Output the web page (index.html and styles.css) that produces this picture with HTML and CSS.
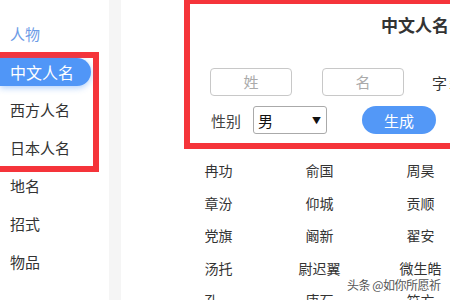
FILE: index.html
```html
<!DOCTYPE html>
<html lang="zh">
<head>
<meta charset="utf-8">
<link rel="stylesheet" href="styles.css">
</head>
<body>
<div class="page">
  <aside class="sidebar">
    <div class="cat">人物</div>
    <div class="hl-box">
      <div class="pill">中文人名</div>
      <div class="item first">西方人名</div>
      <div class="item last">日本人名</div>
    </div>
    <div class="item">地名</div>
    <div class="item">招式</div>
    <div class="item">物品</div>
  </aside>
  <div class="divider"></div>
  <main class="main">
    <section class="form-box">
      <h1 class="title">中文人名</h1>
      <div class="row row1">
        <div class="input">姓</div>
        <div class="input">名</div>
        <div class="label-zi">字<span class="orange">辈</span></div>
      </div>
      <div class="row row2">
        <span class="label">性别</span>
        <div class="select"><span>男</span><span class="arrow">▼</span></div>
        <button class="btn">生成</button>
      </div>
    </section>
    <div class="results">
      <span>冉功</span><span>俞国</span><span>周昊</span>
      <span>章汾</span><span>仰城</span><span>贡顺</span>
      <span>党旗</span><span>阚新</span><span>翟安</span>
      <span>汤托</span><span>尉迟翼</span><span>微生皓</span>
      <span>孔一</span><span>唐石</span><span>符方</span>
    </div>
  </main>
  <div class="watermark">头条 @如你所愿祈</div>
</div>
</body>
</html>
```

FILE: styles.css
```css
* { box-sizing: border-box; margin: 0; padding: 0; }
html, body {
  width: 450px;
  height: 300px;
  overflow: hidden;
  background: #fff;
}
body {
  font-family: "Noto Sans CJK SC", "Noto Sans", sans-serif;
  color: #333;
}
.page {
  position: relative;
  display: flex;
  height: 300px;
  overflow: hidden;
}
.sidebar {
  width: 109px;
  flex: none;
  padding-top: 15px;
  background: #fff;
}
.cat {
  height: 37px;
  line-height: 37px;
  padding-left: 10px;
  font-size: 15px;
  color: #6c9be6;
}
.hl-box {
  width: 105px;
  margin-left: -6px;
  margin-bottom: -5px;
  height: 120px;
  border: 6px solid #f5343a;
  position: relative;
  z-index: 1;
}
.pill {
  height: 28px;
  line-height: 28px;
  width: 91px;
  padding-left: 10px;
  font-size: 16px;
  color: #fff;
  background: #5096f7;
  border-radius: 0 14px 14px 0;
  box-shadow: 0 2px 6px rgba(80, 150, 247, 0.45);
}
.item {
  height: 38px;
  line-height: 38px;
  padding-left: 10px;
  font-size: 15px;
  color: #333;
}
.hl-box .first { margin-top: 5px; }
.hl-box .last { height: 37px; line-height: 37px; }
.divider {
  width: 12px;
  flex: none;
  background: #f5f5f5;
}
.main {
  flex: 1;
  min-width: 0;
  padding-left: 47px;
}
.form-box {
  width: 462px;
  height: 151px;
  margin-top: -2px;
  margin-left: 16px;
  border: 6px solid #f5343a;
  padding-left: 20px;
}
.title {
  font-size: 17px;
  font-weight: bold;
  color: #333;
  text-align: center;
  line-height: 24px;
  margin-top: 9px;
  padding-right: 20px;
}
.row {
  display: flex;
  align-items: center;
  height: 28px;
}
.row1 { margin-top: 31px; }
.row2 { margin-top: 10px; }
.input {
  width: 82px;
  height: 28px;
  border: 1px solid #c8c8c8;
  border-radius: 4px;
  text-align: center;
  line-height: 26px;
  font-size: 15px;
  color: #aaa;
  margin-right: 30px;
}
.label-zi {
  font-size: 15px;
  color: #333;
  white-space: nowrap;
  margin-left: -2px;
}
.orange { color: #f08a2c; margin-left: 2px; }
.label {
  font-size: 15px;
  color: #444;
  width: 43px;
  padding-left: 1px;
}
.select {
  width: 74px;
  height: 28px;
  border: 1px solid #aaa;
  border-radius: 3px;
  display: flex;
  align-items: center;
  justify-content: space-between;
  padding: 0 5px 0 4px;
  font-size: 15px;
  color: #111;
}
.arrow { font-size: 9px; color: #111; }
.btn {
  margin-left: 35px;
  width: 74px;
  height: 28px;
  border: none;
  border-radius: 14px;
  background: #5398f7;
  color: #fff;
  font-family: inherit;
  font-size: 15px;
}
.results {
  display: grid;
  grid-template-columns: repeat(3, 101px);
  grid-auto-rows: 32.5px;
  margin-top: 5px;
  font-size: 14px;
  color: #333;
}
.results span {
  text-align: center;
  line-height: 32.5px;
}
.watermark {
  position: absolute;
  left: 347px;
  top: 277px;
  font-size: 12px;
  line-height: 16px;
  color: #555;
  letter-spacing: -0.5px;
  text-shadow: 0 0 2px #fff, 0 0 2px #fff;
}
```
